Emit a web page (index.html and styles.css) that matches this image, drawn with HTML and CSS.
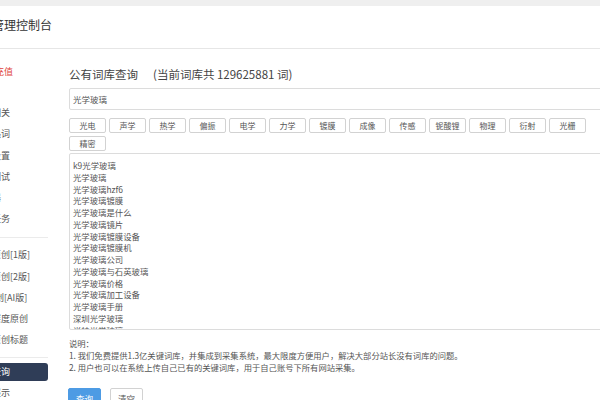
FILE: index.html
```html
<!DOCTYPE html>
<html lang="zh-CN">
<head>
<meta charset="utf-8">
<title>公有词库查询</title>
<link rel="stylesheet" href="styles.css">
</head>
<body>
<div class="topbar"></div>
<header class="header"><span class="brand">管理控制台</span></header>
<div class="layout">
  <nav class="sidebar">
    <div class="nav-item nav-red">在线充值</div>
    <div class="nav-group">
      <div class="nav-item">采集相关</div>
      <div class="nav-item">关键热词</div>
      <div class="nav-item">网站设置</div>
      <div class="nav-item">采集测试</div>
      <div class="nav-item">发布器</div>
      <div class="nav-item">采集任务</div>
    </div>
    <div class="nav-sep"></div>
    <div class="nav-group">
      <div class="nav-item">智能原创[1版]</div>
      <div class="nav-item">智能原创[2版]</div>
      <div class="nav-item nav-ai">伪原创[AI版]</div>
      <div class="nav-item">智能深度原创</div>
      <div class="nav-item">智能原创标题</div>
    </div>
    <div class="nav-sep nav-sep-2"></div>
    <div class="nav-item nav-active">词库查询</div>
    <div class="nav-item">功能展示</div>
  </nav>
  <main class="content">
    <h1 class="title">公有词库查询<span class="title-count">(当前词库共 129625881 词)</span></h1>
    <input class="search" type="text" value="光学玻璃">
    <div class="tags">
      <button class="tag">光电</button>
      <button class="tag">声学</button>
      <button class="tag">热学</button>
      <button class="tag">偏振</button>
      <button class="tag">电学</button>
      <button class="tag">力学</button>
      <button class="tag">镀膜</button>
      <button class="tag">成像</button>
      <button class="tag">传感</button>
      <button class="tag">铌酸锂</button>
      <button class="tag">物理</button>
      <button class="tag">衍射</button>
      <button class="tag">光栅</button>
      <button class="tag">精密</button>
    </div>
    <div class="word-list">
      <div>k9光学玻璃</div>
      <div>光学玻璃</div>
      <div>光学玻璃hzf6</div>
      <div>光学玻璃镀膜</div>
      <div>光学玻璃是什么</div>
      <div>光学玻璃镜片</div>
      <div>光学玻璃镀膜设备</div>
      <div>光学玻璃镀膜机</div>
      <div>光学玻璃公司</div>
      <div>光学玻璃与石英玻璃</div>
      <div>光学玻璃价格</div>
      <div>光学玻璃加工设备</div>
      <div>光学玻璃手册</div>
      <div>深圳光学玻璃</div>
      <div>肖特光学玻璃</div>
    </div>
    <div class="notes">
      <p>说明：</p>
      <p>1. 我们免费提供1.3亿关键词库，并集成到采集系统，最大限度方便用户，解决大部分站长没有词库的问题。</p>
      <p>2. 用户也可以在系统上传自己已有的关键词库，用于自己账号下所有网站采集。</p>
    </div>
    <div class="actions">
      <button class="btn btn-primary">查询</button>
      <button class="btn btn-default">清空</button>
    </div>
  </main>
</div>
</body>
</html>
```
FILE: styles.css
```css
html, body {
  margin: 0;
  padding: 0;
  width: 600px;
  height: 400px;
  overflow: hidden;
  background: #fff;
  font-family: "Noto Sans CJK SC", "Noto Sans", sans-serif;
  color: #555;
}

.topbar {
  height: 6px;
  background: #efefef;
}

.header {
  height: 42px;
  border-bottom: 1px solid #e6e6e6;
  display: flex;
  align-items: center;
}

.brand {
  margin-left: -8px;
  margin-top: -4px;
  font-size: 12px;
  line-height: 16px;
  color: #333;
  white-space: nowrap;
}

.layout {
  display: flex;
  width: 700px;
}

.sidebar {
  flex: none;
  width: 74px;
  margin-left: -26px;
  margin-right: 21px;
  padding-top: 12px;
  font-size: 9px;
}

.nav-item {
  height: 21.2px;
  line-height: 21.2px;
  white-space: nowrap;
  color: #555;
}

.nav-red {
  color: #e0453c;
  padding-left: 3px;
  margin-bottom: 20px;
}

.nav-ai {
  padding-left: 3px;
}

.nav-sep {
  height: 1px;
  background: #ebebeb;
  margin: 8px 0 6px;
}

.nav-sep-2 {
  margin: 7px 0 5px;
}

.nav-active {
  height: 18px;
  line-height: 18px;
  background: #2f3d57;
  color: #fff;
  border-radius: 3px;
  margin-bottom: 1px;
}

.content {
  flex: none;
  width: 545px;
  padding-top: 16px;
}

.title {
  margin: 0 0 5px;
  font-size: 11.5px;
  line-height: 18px;
  font-weight: normal;
  color: #444;
  white-space: nowrap;
}

.title-count {
  margin-left: 15px;
}

.search {
  display: block;
  box-sizing: border-box;
  width: 100%;
  height: 22px;
  margin: 0;
  padding: 0 3px;
  border: 1px solid #dcdcdc;
  border-radius: 2px;
  font-family: inherit;
  font-size: 8.5px;
  color: #555;
  outline: none;
}

.tags {
  display: flex;
  flex-wrap: wrap;
  gap: 3px 3px;
  margin-top: 8px;
}

.tag {
  box-sizing: border-box;
  width: 37px;
  height: 15px;
  margin: 0;
  padding: 0;
  border: 1px solid #d2d2d2;
  border-radius: 2px;
  background: #fff;
  font-family: inherit;
  font-size: 8px;
  line-height: 13px;
  color: #555;
  text-align: center;
}

.word-list {
  box-sizing: border-box;
  height: 177px;
  margin-top: 2px;
  padding: 6px 3px 0;
  border: 1px solid #dcdcdc;
  border-radius: 2px;
  overflow: hidden;
  font-size: 8.4px;
  line-height: 11.77px;
  color: #555;
}

.notes {
  margin-top: 7px;
  font-size: 8.3px;
  line-height: 12px;
  color: #555;
}

.notes p {
  margin: 0;
  white-space: nowrap;
}

.actions {
  display: flex;
  gap: 9px;
  margin-top: 15px;
  margin-left: -1px;
}

.btn {
  box-sizing: border-box;
  height: 21px;
  width: 33px;
  margin: 0;
  padding: 0;
  border-radius: 2px;
  font-family: inherit;
  font-size: 8.5px;
  line-height: 19px;
  text-align: center;
}

.btn-primary {
  background: #4d9be4;
  border: 1px solid #4d9be4;
  color: #fff;
}

.btn-default {
  background: #fff;
  border: 1px solid #d2d2d2;
  color: #555;
}
```
